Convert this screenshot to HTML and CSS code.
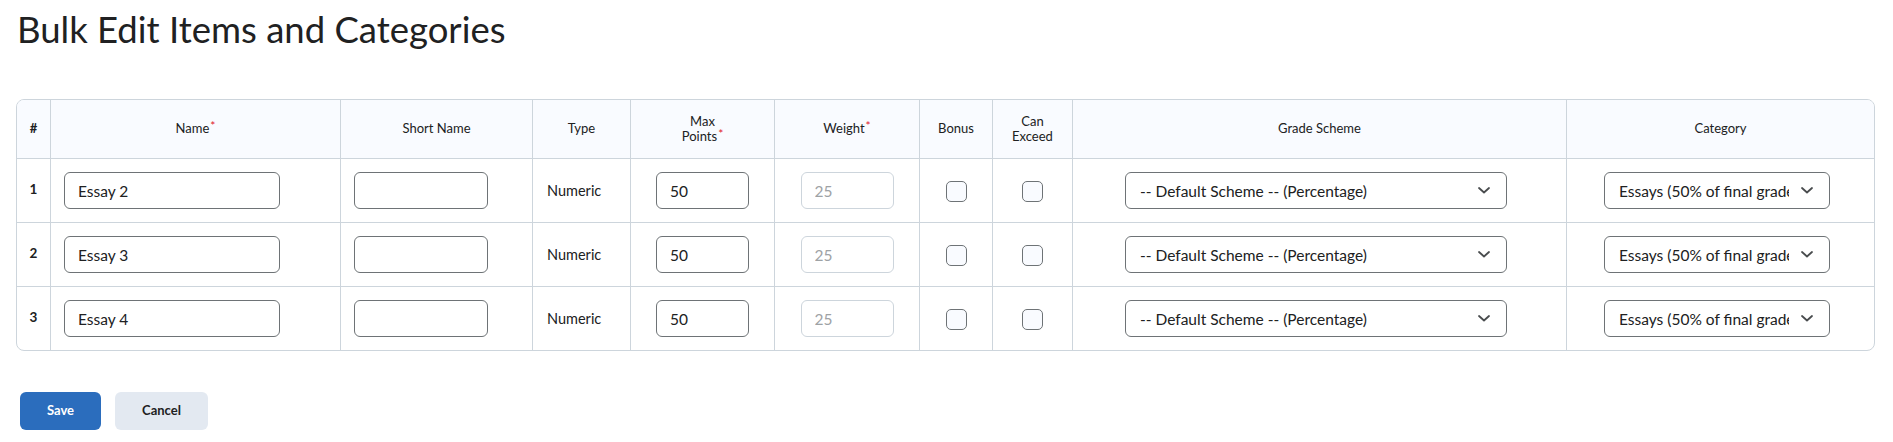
FILE: index.html
```html
<!DOCTYPE html>
<html lang="en">
<head>
<meta charset="utf-8">
<title>Bulk Edit Items and Categories</title>
<link rel="stylesheet" href="styles.css">
</head>
<body>
<h1 class="page-title">Bulk Edit Items and Categories</h1>

<div class="grid-wrap">
  <table class="grid">
    <colgroup>
      <col class="c-num"><col class="c-name"><col class="c-short"><col class="c-type"><col class="c-max"><col class="c-weight"><col class="c-bonus"><col class="c-exceed"><col class="c-scheme"><col class="c-cat">
    </colgroup>
    <thead>
      <tr>
        <th class="num-h">#</th>
        <th>Name<span class="req">*</span></th>
        <th>Short Name</th>
        <th>Type</th>
        <th>Max<br>Points<span class="req">*</span></th>
        <th>Weight<span class="req">*</span></th>
        <th>Bonus</th>
        <th>Can<br>Exceed</th>
        <th>Grade Scheme</th>
        <th>Category</th>
      </tr>
    </thead>
    <tbody>
      <tr>
        <td class="num">1</td>
        <td class="left"><input class="field name-field" type="text" value="Essay 2"></td>
        <td class="left"><input class="field short-field" type="text" value=""></td>
        <td class="left type">Numeric</td>
        <td class="center"><input class="field small-field" type="text" value="50"></td>
        <td class="center"><input class="field small-field" type="text" value="25" disabled></td>
        <td class="center"><span class="check"></span></td>
        <td class="center"><span class="check"></span></td>
        <td class="center sel-cell"><span class="select scheme"><select><option>-- Default Scheme -- (Percentage)</option></select><svg class="chev" width="12" height="7" viewBox="0 0 12 7"><polyline points="1,1 6,5.5 11,1" fill="none" stroke="#494c4e" stroke-width="1.8" stroke-linecap="round" stroke-linejoin="round"/></svg></span></td>
        <td class="center sel-cell"><span class="select cat"><select><option>Essays (50% of final grade)</option></select><svg class="chev" width="12" height="7" viewBox="0 0 12 7"><polyline points="1,1 6,5.5 11,1" fill="none" stroke="#494c4e" stroke-width="1.8" stroke-linecap="round" stroke-linejoin="round"/></svg></span></td>
      </tr>
      <tr>
        <td class="num">2</td>
        <td class="left"><input class="field name-field" type="text" value="Essay 3"></td>
        <td class="left"><input class="field short-field" type="text" value=""></td>
        <td class="left type">Numeric</td>
        <td class="center"><input class="field small-field" type="text" value="50"></td>
        <td class="center"><input class="field small-field" type="text" value="25" disabled></td>
        <td class="center"><span class="check"></span></td>
        <td class="center"><span class="check"></span></td>
        <td class="center sel-cell"><span class="select scheme"><select><option>-- Default Scheme -- (Percentage)</option></select><svg class="chev" width="12" height="7" viewBox="0 0 12 7"><polyline points="1,1 6,5.5 11,1" fill="none" stroke="#494c4e" stroke-width="1.8" stroke-linecap="round" stroke-linejoin="round"/></svg></span></td>
        <td class="center sel-cell"><span class="select cat"><select><option>Essays (50% of final grade)</option></select><svg class="chev" width="12" height="7" viewBox="0 0 12 7"><polyline points="1,1 6,5.5 11,1" fill="none" stroke="#494c4e" stroke-width="1.8" stroke-linecap="round" stroke-linejoin="round"/></svg></span></td>
      </tr>
      <tr>
        <td class="num">3</td>
        <td class="left"><input class="field name-field" type="text" value="Essay 4"></td>
        <td class="left"><input class="field short-field" type="text" value=""></td>
        <td class="left type">Numeric</td>
        <td class="center"><input class="field small-field" type="text" value="50"></td>
        <td class="center"><input class="field small-field" type="text" value="25" disabled></td>
        <td class="center"><span class="check"></span></td>
        <td class="center"><span class="check"></span></td>
        <td class="center sel-cell"><span class="select scheme"><select><option>-- Default Scheme -- (Percentage)</option></select><svg class="chev" width="12" height="7" viewBox="0 0 12 7"><polyline points="1,1 6,5.5 11,1" fill="none" stroke="#494c4e" stroke-width="1.8" stroke-linecap="round" stroke-linejoin="round"/></svg></span></td>
        <td class="center sel-cell"><span class="select cat"><select><option>Essays (50% of final grade)</option></select><svg class="chev" width="12" height="7" viewBox="0 0 12 7"><polyline points="1,1 6,5.5 11,1" fill="none" stroke="#494c4e" stroke-width="1.8" stroke-linecap="round" stroke-linejoin="round"/></svg></span></td>
      </tr>
    </tbody>
  </table>
</div>

<div class="actions">
  <button class="btn primary" type="button">Save</button>
  <button class="btn secondary" type="button">Cancel</button>
</div>
</body>
</html>
```
FILE: styles.css
```css
* { box-sizing: border-box; }

body {
  margin: 0;
  padding: 0 18px 0 16px;
  background: #ffffff;
  color: #202122;
  font-family: Lato, "Noto Sans", "Liberation Sans", sans-serif;
}

.page-title {
  margin: 0;
  padding: 5px 0 0 1px;
  font-size: 36.5px;
  line-height: 49px;
  font-weight: 400;
  color: #202122;
}

.grid-wrap {
  margin-top: 45px;
  border: 1px solid #cdd5dc;
  border-radius: 8px;
  overflow: hidden;
}

.grid {
  width: 100%;
  table-layout: fixed;
  border-collapse: separate;
  border-spacing: 0;
}

.c-num { width: 34px; }
.c-name { width: 290px; }
.c-short { width: 192px; }
.c-type { width: 98px; }
.c-max { width: 144px; }
.c-weight { width: 145px; }
.c-bonus { width: 73px; }
.c-exceed { width: 80px; }
.c-scheme { width: 494px; }
.c-cat { width: 307px; }

.grid th,
.grid td {
  border-right: 1px solid #cdd5dc;
  border-bottom: 1px solid #cdd5dc;
  vertical-align: middle;
  padding: 0;
}
.grid th:last-child,
.grid td:last-child { border-right: none; }
.grid tbody tr:last-child td { border-bottom: none; }

.grid th {
  height: 59px;
  background: #f9fbff;
  font-size: 13px;
  line-height: 15.5px;
  font-weight: 400;
  color: #202122;
  text-align: center;
}
.grid th.num-h { font-weight: 700; }

.req {
  color: #e0202b;
  font-size: 12px;
  vertical-align: 3px;
  line-height: 0;
  margin-left: 1px;
}

.grid td { height: 64px; }
.grid tbody tr:last-child td { height: 63px; }

.grid td.num {
  text-align: center;
  font-weight: 700;
  font-size: 13.5px;
  padding-bottom: 3px;
}
.grid td.left { padding-left: 13px; }
.grid td.center { text-align: center; }
.grid td.sel-cell { padding-right: 7px; }
.grid td.type {
  padding-left: 14px;
  font-size: 14.5px;
}

.field {
  display: block;
  height: 37px;
  margin: 0;
  padding: 0 13px;
  border: 1px solid #6e7376;
  border-radius: 6px;
  background: #ffffff;
  font-family: Lato, "Noto Sans", "Liberation Sans", sans-serif;
  font-size: 15.5px;
  color: #202122;
  outline: none;
}
.name-field { width: 216px; }
.short-field { width: 134px; }
.small-field { width: 93px; margin: 0 auto; }
.field:disabled {
  border-color: #cdd5dc;
  color: #9ea2a5;
  background: #ffffff;
}

.check {
  display: inline-block;
  width: 21px;
  height: 21px;
  border: 1px solid #6e7376;
  border-radius: 5px;
  background: #f9fbff;
  vertical-align: middle;
}

.select {
  position: relative;
  display: inline-block;
  vertical-align: middle;
}
.select select {
  display: block;
  height: 37px;
  margin: 0;
  padding: 0 40px 0 14px;
  border: 1px solid #6e7376;
  border-radius: 6px;
  background: #ffffff;
  font-family: Lato, "Noto Sans", "Liberation Sans", sans-serif;
  font-size: 15.5px;
  color: #202122;
  -webkit-appearance: none;
  appearance: none;
  outline: none;
}
.scheme select { width: 382px; }
.cat select { width: 226px; }

.chev {
  position: absolute;
  right: 17px;
  top: 15px;
  pointer-events: none;
}

.actions {
  display: flex;
  gap: 14px;
  margin-top: 41px;
  padding-left: 4px;
}

.btn {
  height: 38px;
  padding: 0 0 2px;
  border: none;
  border-radius: 6px;
  font-family: Lato, "Noto Sans", "Liberation Sans", sans-serif;
  font-size: 13px;
  font-weight: 700;
  cursor: pointer;
}
.btn.primary {
  width: 81px;
  background: #2b6dbd;
  color: #ffffff;
}
.btn.secondary {
  width: 93px;
  background: #e3e9f1;
  color: #202122;
}
```
